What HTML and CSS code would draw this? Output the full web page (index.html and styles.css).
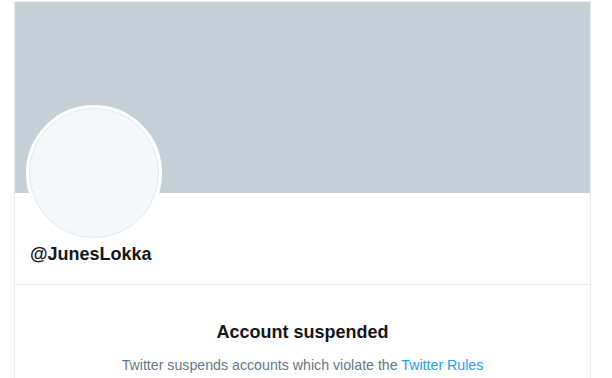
FILE: index.html
```html
<!DOCTYPE html>
<html lang="en">
<head>
    <meta charset="UTF-8">
    <title>@JunesLokka</title>
    <link rel="stylesheet" href="styles.css">
</head>
<body>
    <div class="column">
        <div class="banner"></div>

        <div class="profile">
            <div class="avatar">
                <div class="avatar-inner"></div>
            </div>
            <div class="handle">@JunesLokka</div>
        </div>

        <div class="suspended">
            <h1>Account suspended</h1>
            <p>Twitter suspends accounts which violate the <a href="#">Twitter Rules</a></p>
        </div>
    </div>
</body>
</html>
```

FILE: styles.css
```css
body {
    margin: 0;
    padding: 0;
    background-color: white;
    font-family: "Liberation Sans", Arial, sans-serif;
    overflow: hidden;
}

.column {
    margin-left: 14px;
    margin-top: 1px;
    width: 575px;
    border-left: 1px solid #e6ecf0;
    border-right: 1px solid #e6ecf0;
    border-top: 1px solid #e6ecf0;
    height: 376px;
    overflow: hidden;
}

.banner {
    height: 191px;
    background-color: #c4cfd6;
}

.profile {
    display: flex;
    flex-direction: column;
    padding: 0 16px 0 11px;
    border-bottom: 1px solid #e6ecf0;
    height: 91px;
}

.avatar {
    width: 130px;
    height: 130px;
    margin-top: -88px;
    border: 3px solid white;
    border-radius: 50%;
    background-color: white;
}

.avatar-inner {
    width: 128px;
    height: 128px;
    border: 1px solid #e1e8ed;
    border-radius: 50%;
    background-color: #f5f8fa;
}

.handle {
    margin-top: 3px;
    padding-left: 4px;
    font-size: 18px;
    font-weight: bold;
    color: #14171a;
}

.suspended {
    text-align: center;
    padding-top: 37px;
}

.suspended h1 {
    margin: 0;
    font-size: 18px;
    font-weight: bold;
    color: #14171a;
}

.suspended p {
    margin: 14px 0 0;
    font-size: 14.2px;
    color: #657786;
}

.suspended a {
    color: #1da1f2;
    text-decoration: none;
}
```
